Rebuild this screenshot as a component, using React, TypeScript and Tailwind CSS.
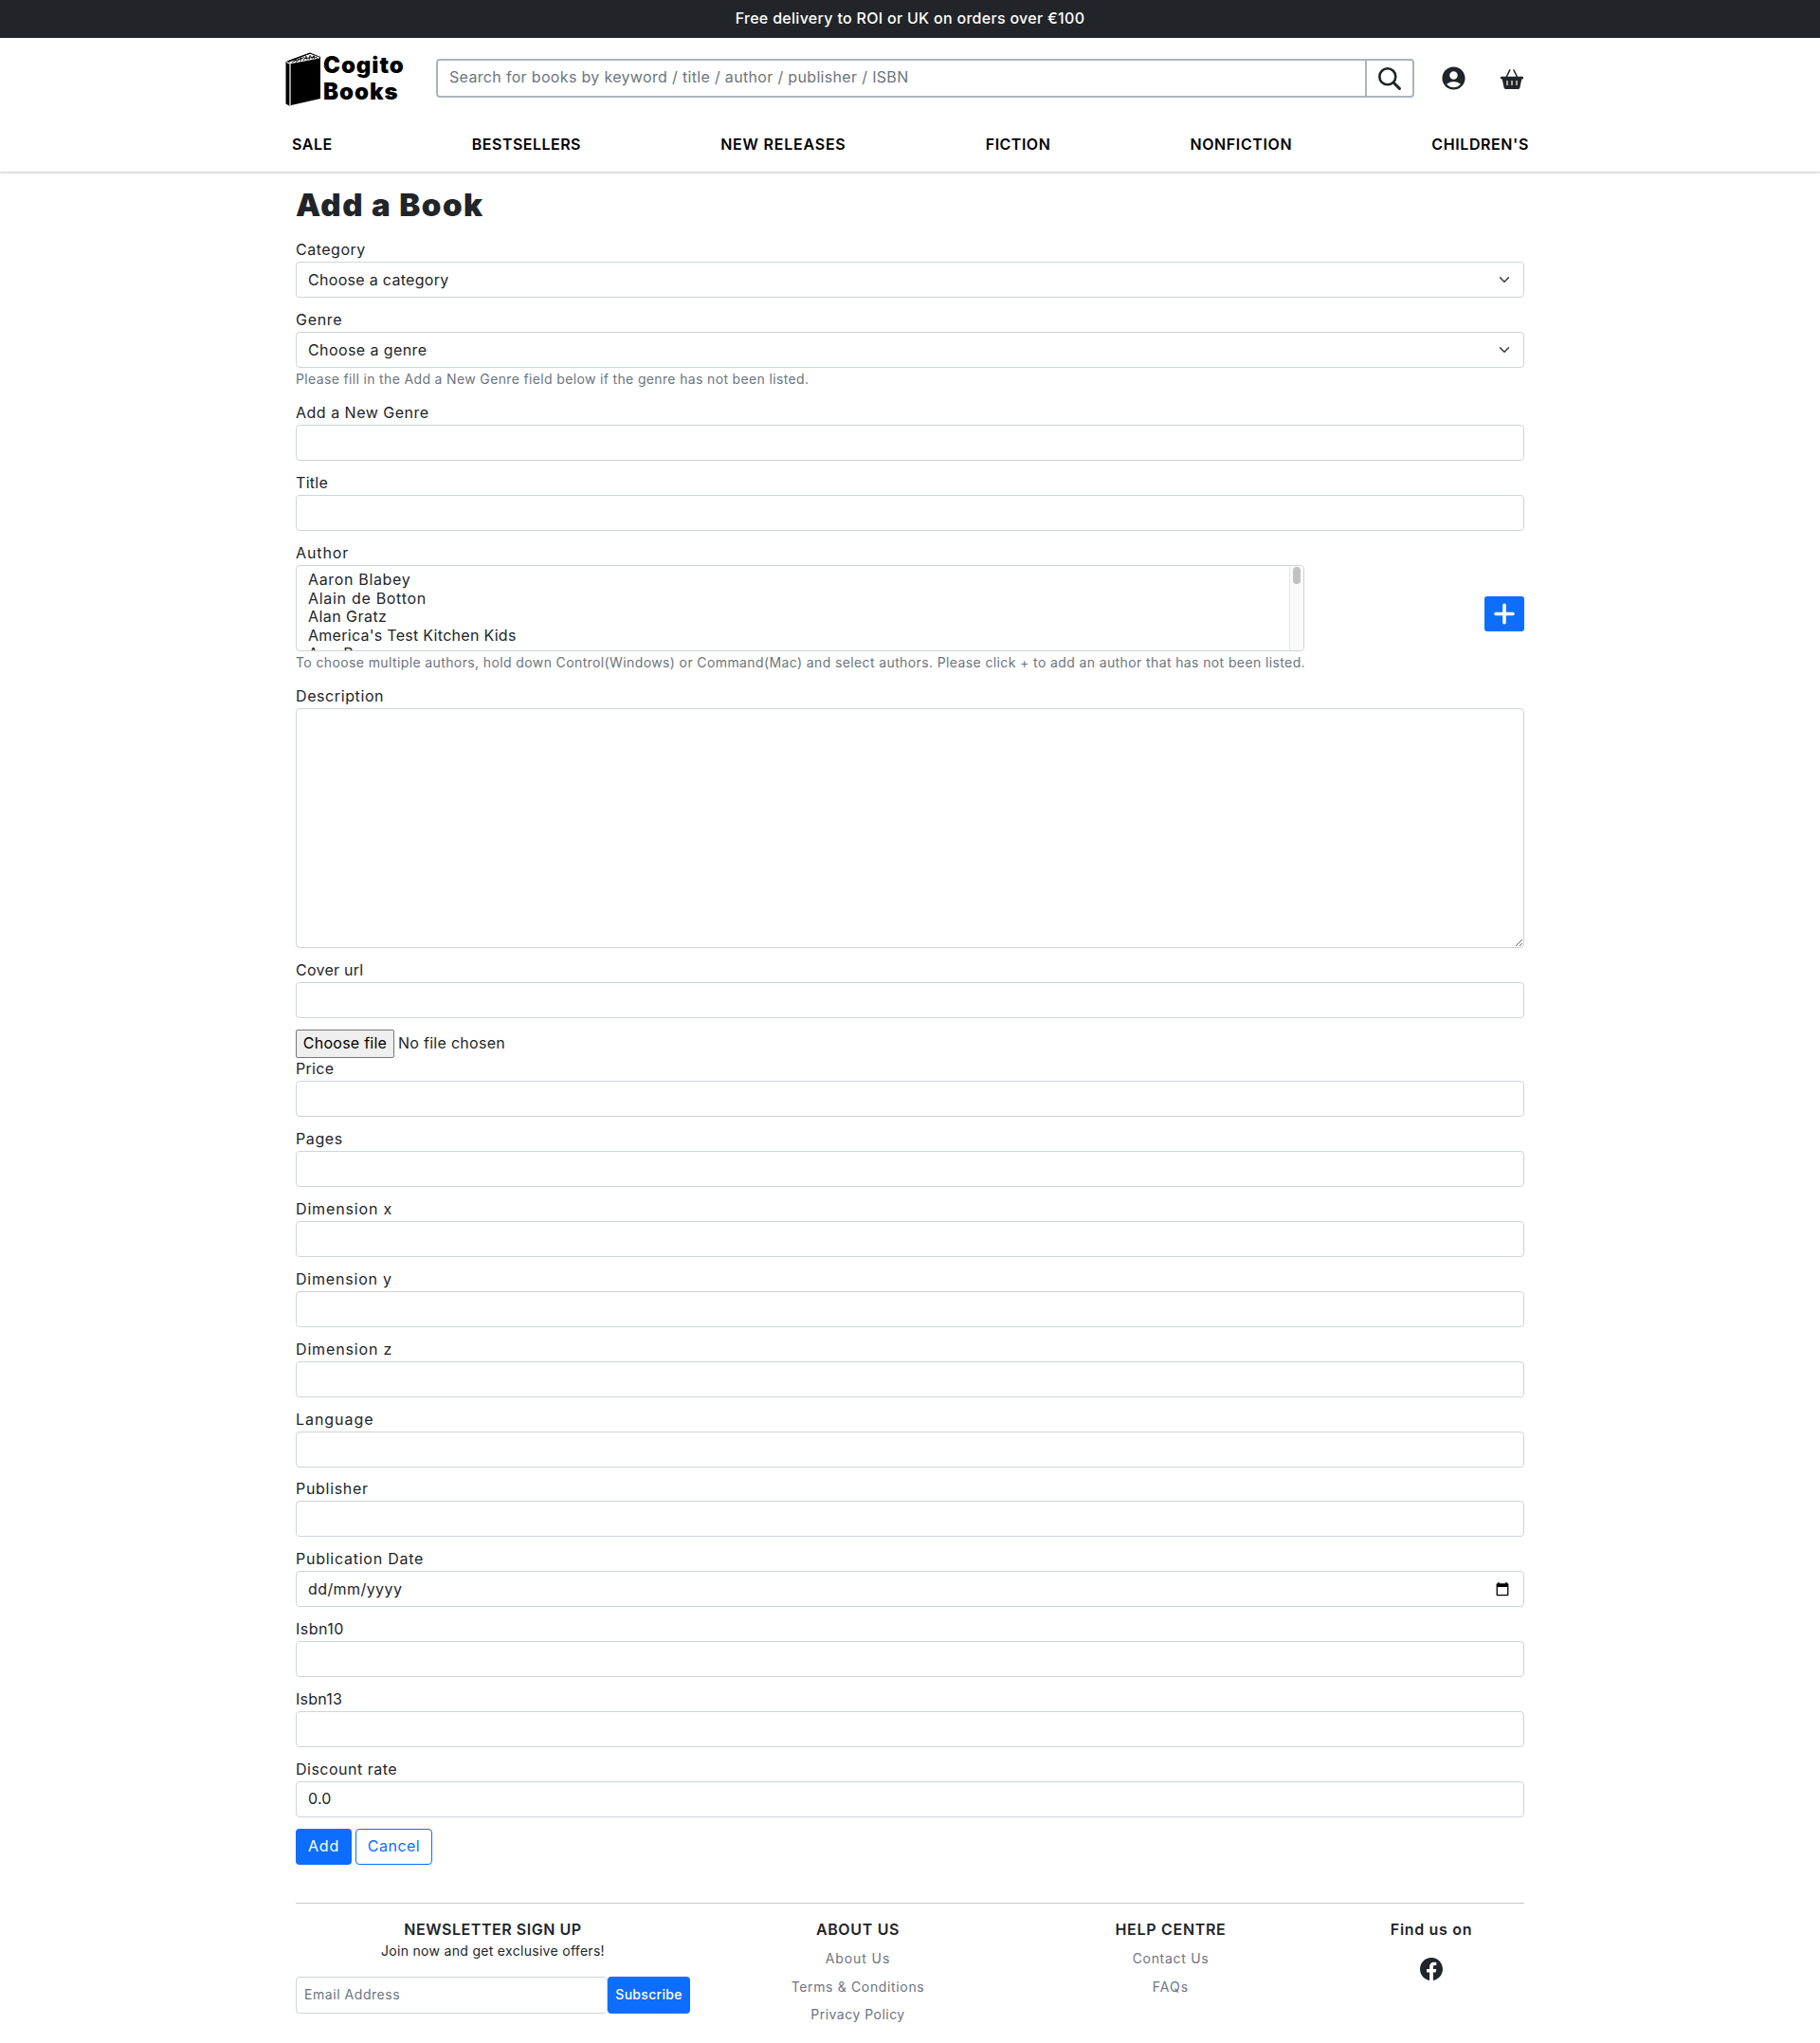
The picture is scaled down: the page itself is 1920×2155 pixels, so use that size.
import type { ReactNode } from "react";
import { MdAccountCircle } from "react-icons/md";
import { BsFacebook } from "react-icons/bs";

function BookLogo() {
  return (
    <svg width="38" height="58" viewBox="0 0 38 58" className="shrink-0">
      <path d="M0.5 10 L26 0.5 L37 5 L37 49 L4 56.5 L0.5 54.5 Z" fill="#000" />
      <path d="M4 10.4 L26 1.8 L36 5.4 L36 6.4 L5.5 12.2 Z" fill="#fff" />
      <path
        d="M3 9.6 L26 1.2 M7 11 L12 7.6 M11 10.6 L17 6 L16 9.6 M19 9 L22 4.2 L23 8.4 M25 8 L26 3.4 L29 7.4 M31 7 L29 4 L34 6.4 M9 9.4 L20 5.6 M21 6.6 L31 5.2"
        stroke="#000"
        strokeWidth="0.9"
        fill="none"
      />
      <path d="M1.3 10.5 L5 12.2 L5 56" stroke="#fff" strokeWidth="1.2" fill="none" />
    </svg>
  );
}

function SearchIcon() {
  return (
    <svg width="24" height="24" viewBox="0 0 24 24" fill="none" stroke="#212529" strokeLinecap="round">
      <circle cx="9.8" cy="9.8" r="8.5" strokeWidth="2.6" />
      <path d="M16.2 16.2 L22.4 22.4" strokeWidth="3" />
    </svg>
  );
}

function BasketIcon() {
  return (
    <svg width="24" height="22" viewBox="0 0 24 22" fill="#212529">
      <path d="M9.8 0.8 L5.8 9 M13.9 0.8 L17.9 9" stroke="#212529" strokeWidth="1.5" strokeLinecap="round" />
      <path
        fillRule="evenodd"
        d="M0.8 7.8 H23.2 A0.8 0.8 0 0 1 24 8.6 V9.6 A0.8 0.8 0 0 1 23.2 10.4 H22.3 L20.4 19.4 A2.2 2.2 0 0 1 18.3 21 H5.7 A2.2 2.2 0 0 1 3.6 19.4 L1.7 10.4 H0.8 A0.8 0.8 0 0 1 0 9.6 V8.6 A0.8 0.8 0 0 1 0.8 7.8 Z M6.4 12 V17 H7.6 V12 Z M11.4 12 V17 H12.6 V12 Z M16.4 12 V17 H17.6 V12 Z"
      />
    </svg>
  );
}

function Chevron() {
  return (
    <svg width="16" height="12" viewBox="0 0 16 16">
      <path d="m2 5 6 6 6-6" fill="none" stroke="#343a40" strokeWidth="2" strokeLinecap="round" strokeLinejoin="round" />
    </svg>
  );
}

function CalendarIcon() {
  return (
    <svg width="14" height="15" viewBox="0 0 14 15">
      <path
        fillRule="evenodd"
        fill="#000"
        d="M2.3 0 H3.7 V1.3 H10.3 V0 H11.7 V1.3 H12.6 A0.9 0.9 0 0 1 13.4 2.2 V13.3 A0.9 0.9 0 0 1 12.6 14.2 H1.4 A0.9 0.9 0 0 1 0.6 13.3 V2.2 A0.9 0.9 0 0 1 1.4 1.3 H2.3 Z M1.9 5 V12.9 H12.1 V5 Z"
      />
    </svg>
  );
}

const box = "flex h-[38px] w-full items-center justify-between rounded-[4px] border border-[#ced4da] bg-white px-3";

function Label({ track, children }: { track: string; children: ReactNode }) {
  return <div className={`h-6 leading-[23px] ${track}`}>{children}</div>;
}

function Field({ label, track, children }: { label: string; track: string; children?: ReactNode }) {
  return (
    <div className="mb-3">
      <Label track={track}>{label}</Label>
      {children ?? <input className={box} />}
    </div>
  );
}

function Heading({ track, children }: { track: string; children: ReactNode }) {
  return <div className={`h-6 leading-6 font-semibold ${track}`}>{children}</div>;
}

function FooterLink({ track, children }: { track: string; children: ReactNode }) {
  return <a className={`block h-[29.5px] text-[14px] leading-[21px] text-[#6c757d] ${track}`}>{children}</a>;
}

export default function App() {
  return (
    <div className="h-[2155px] w-full overflow-hidden bg-white font-['Inter',sans-serif] text-[16px] leading-6 text-[#212529]">
      <div className="flex h-10 justify-center bg-[#212529] pt-[7px] font-medium tracking-[0.3px] text-white">
        Free delivery to ROI or UK on orders over €100
      </div>

      <header className="h-[142px] border-b border-[#d9dadb] shadow-[0_1px_2px_rgba(0,0,0,0.12)]">
        <div className="mx-auto flex w-[1320px] items-start pt-[15px]">
          <div className="flex w-[160px] gap-[2px] pl-[1px]">
            <BookLogo />
            <div className="text-[24px] leading-[28.3px] font-black tracking-[0.95px] text-black">
              <div>Cogito</div>
              <div>Books</div>
            </div>
          </div>
          <div className="mt-[7px] flex h-[41px] w-[1032px] rounded-[4px] border-2 border-[#a9b4bd]">
            <div className="flex-1 border-r-2 border-[#a9b4bd] pt-[5px] pl-3 tracking-[0.33px] text-[#6c757d]">
              Search for books by keyword / title / author / publisher / ISBN
            </div>
            <div className="flex w-12 items-center justify-center">
              <SearchIcon />
            </div>
          </div>
          <MdAccountCircle size={29} className="mt-[13px] ml-[26.5px]" />
          <div className="mt-[18px] ml-[35.5px]">
            <BasketIcon />
          </div>
        </div>
        <nav className="mx-auto mt-[27px] flex w-[1306px] justify-between pl-px font-semibold text-black">
          <a className="tracking-[0.5px]">SALE</a>
          <a className="tracking-[0.48px]">BESTSELLERS</a>
          <a className="tracking-[0.78px]">NEW RELEASES</a>
          <a className="tracking-[0.5px]">FICTION</a>
          <a className="tracking-[0.6px]">NONFICTION</a>
          <a className="tracking-[0.6px]">CHILDREN'S</a>
        </nav>
      </header>

      <main className="mx-auto w-[1296px]">
        <h1 className="h-[70px] pt-[14px] text-[33px] leading-[41px] font-black tracking-[1.5px]">Add a Book</h1>

        <Field label="Category" track="tracking-[0.5px]">
          <div className={box}>
            <span className="pb-px tracking-[0.3px]">Choose a category</span>
            <Chevron />
          </div>
        </Field>
        <Field label="Genre" track="tracking-[0.7px]">
          <div className={box}>
            <span className="pb-px tracking-[0.4px]">Choose a genre</span>
            <Chevron />
          </div>
          <div className="h-6 text-[14px] leading-6 tracking-[0.35px] text-[#6c757d]">
            Please fill in the Add a New Genre field below if the genre has not been listed.
          </div>
        </Field>
        <Field label="Add a New Genre" track="tracking-[0.5px]" />
        <Field label="Title" track="tracking-[0.3px]" />

        <Field label="Author" track="tracking-[0.9px]">
          <div className="flex items-center justify-between">
            <div>
              <div className="flex h-[91px] w-[1064px] justify-between overflow-hidden rounded-[4px] border border-[#ced4da]">
                <div className="pt-[5.4px] pl-3 leading-[19.5px]">
                  <div className="tracking-[0.66px]">Aaron Blabey</div>
                  <div className="tracking-[0.7px]">Alain de Botton</div>
                  <div className="tracking-[0.45px]">Alan Gratz</div>
                  <div className="tracking-[0.28px]">America's Test Kitchen Kids</div>
                  <div className="tracking-[0.7px]">Ann Rower</div>
                </div>
                <div className="flex w-[15px] justify-center border-l border-[#e6e6e6] bg-[#fafafa] pt-px">
                  <div className="h-[18px] w-2 rounded-full bg-[#c1c1c1]" />
                </div>
              </div>
              <div className="h-6 text-[14px] leading-6 tracking-[0.385px] whitespace-nowrap text-[#6c757d]">
                To choose multiple authors, hold down Control(Windows) or Command(Mac) and select authors. Please click + to add an
                author that has not been listed.
              </div>
            </div>
            <button className="-mt-[12px] flex h-[37px] w-[42px] items-center justify-center rounded-[3px] bg-[#0d6efd]">
              <svg width="22" height="23" viewBox="0 0 22 23">
                <path d="M2 11.5H20M11 2.3V20.7" stroke="#fff" strokeWidth="3.6" strokeLinecap="round" />
              </svg>
            </button>
          </div>
        </Field>

        <Field label="Description" track="tracking-[0.6px]">
          <textarea className="block h-[253px] w-full rounded-[4px] border border-[#ced4da]" />
        </Field>
        <Field label="Cover url" track="tracking-[0.25px]" />

        <div className="flex h-[30px] items-center gap-1">
          <button className="flex h-[30px] w-[104px] items-center justify-center rounded-[2px] border border-[#767676] bg-[#efefef] pb-[2px] tracking-[0.25px] text-black">
            Choose file
          </button>
          <span className="pb-[2px] tracking-[0.28px]">No file chosen</span>
        </div>

        <Field label="Price" track="tracking-[0.3px]" />
        <Field label="Pages" track="tracking-[0.6px]" />
        <Field label="Dimension x" track="tracking-[0.85px]" />
        <Field label="Dimension y" track="tracking-[0.8px]" />
        <Field label="Dimension z" track="tracking-[0.85px]" />
        <Field label="Language" track="tracking-[0.95px]" />
        <div className="-mt-px">
          <Field label="Publisher" track="tracking-[0.7px]" />
        </div>
        <Field label="Publication Date" track="tracking-[0.75px]">
          <div className={box}>
            <span className="pb-px tracking-[0.42px]">dd/mm/yyyy</span>
            <span className="mr-[3px]">
              <CalendarIcon />
            </span>
          </div>
        </Field>
        <Field label="Isbn10" track="tracking-[0.5px]" />
        <Field label="Isbn13" track="tracking-[0.25px]" />
        <Field label="Discount rate" track="tracking-[0.5px]">
          <input className={`${box} pb-[2px] tracking-[0.2px]`} defaultValue="0.0" />
        </Field>

        <div className="flex gap-1">
          <button className="h-[38px] w-[59px] rounded-[4px] bg-[#0d6efd] pb-[2px] tracking-[0.8px] text-white">Add</button>
          <button className="h-[38px] w-[81px] rounded-[4px] border border-[#0d6efd] pb-[2px] tracking-[0.5px] text-[#0d6efd]">Cancel</button>
        </div>
      </main>

      <footer className="mx-auto mt-10 w-[1296px] border-t border-[#c8c9ca]">
        <div className="-mx-3 flex pt-[15px] text-center">
          <div className="w-[440px] px-3">
            <Heading track="tracking-[0.55px]">NEWSLETTER SIGN UP</Heading>
            <div className="h-[38px] text-[14px] leading-[22px] tracking-[0.3px]">Join now and get exclusive offers!</div>
            <div className="flex h-[39px]">
              <div className="w-[329px] rounded-[4px] border border-[#ced4da] pt-[7px] pl-2 text-left text-[14px] leading-[21px] tracking-[0.55px] text-[#6c757d]">
                Email Address
              </div>
              <button className="w-[87px] rounded-[4px] bg-[#0d6efd] pb-px text-[14px] font-medium tracking-[0.3px] text-white">Subscribe</button>
            </div>
          </div>
          <div className="w-[330px]">
            <Heading track="tracking-[0.65px]">ABOUT US</Heading>
            <div className="pt-[8.4px]">
              <FooterLink track="tracking-[0.9px]">About Us</FooterLink>
              <FooterLink track="tracking-[0.65px]">Terms &amp; Conditions</FooterLink>
              <FooterLink track="tracking-[0.48px]">Privacy Policy</FooterLink>
            </div>
          </div>
          <div className="w-[330px]">
            <Heading track="tracking-[0.7px]">HELP CENTRE</Heading>
            <div className="pt-[8.4px]">
              <FooterLink track="tracking-[0.7px]">Contact Us</FooterLink>
              <FooterLink track="tracking-[1px]">FAQs</FooterLink>
            </div>
          </div>
          <div className="flex w-[220px] flex-col items-center">
            <Heading track="tracking-[0.68px]">Find us on</Heading>
            <BsFacebook size={24} className="mt-[18px]" />
          </div>
        </div>
      </footer>
    </div>
  );
}
